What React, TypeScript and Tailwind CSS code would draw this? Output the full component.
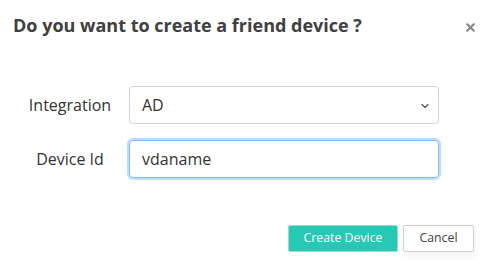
import { X, ChevronDown } from "lucide-react";

const font = { fontFamily: '"Open Sans", "Noto Sans", sans-serif' };

export default function App() {
  return (
    <div className="w-[491px] h-[267px] bg-white relative" style={font}>
      {/* Header */}
      <div className="flex items-start justify-between pl-[13px] pr-[14px] pt-[13px]">
        <h2 className="text-[18px] leading-[24px] font-bold text-[#404040]">
          Do you want to create a friend device ?
        </h2>
        <button className="mt-[8px] text-[#888]">
          <X size={13} strokeWidth={4} />
        </button>
      </div>

      {/* Body */}
      <div className="flex flex-col gap-[16px] pt-[49px] pl-[20px]">
        <div className="flex items-center gap-[9px]">
          <label className="w-[100px] text-center text-[16px] text-[#333]">Integration</label>
          <div className="relative w-[310px] h-[38px] border border-[#ced4da] rounded-[4px] flex items-center pl-[12px] text-[16px] text-[#333]">
            AD
            <ChevronDown size={12} strokeWidth={2.5} className="absolute right-[7px] top-[13px] text-[#555]" />
          </div>
        </div>
        <div className="flex items-center gap-[9px]">
          <label className="w-[100px] text-center text-[16px] text-[#333]">Device Id</label>
          <div className="w-[310px] h-[38px] border border-[#80bdff] rounded-[4px] shadow-[0_0_0_2px_rgba(0,123,255,0.25)] flex items-center pl-[12px] text-[16px] text-[#333]">
            vdaname
          </div>
        </div>
      </div>

      {/* Footer */}
      <div className="flex justify-end gap-[5px] pt-[47px] pr-[17px]">
        <button className="w-[110px] h-[27px] bg-[#26c9b4] border border-[#9fd9cf] rounded-[2px] text-white text-[12.3px]">
          Create Device
        </button>
        <button className="w-[71px] h-[27px] bg-white border border-[#d0d0d0] rounded-[2px] text-[#444] text-[12.3px] shadow-[2px_4px_8px_rgba(0,0,0,0.06)]">
          Cancel
        </button>
      </div>
    </div>
  );
}
